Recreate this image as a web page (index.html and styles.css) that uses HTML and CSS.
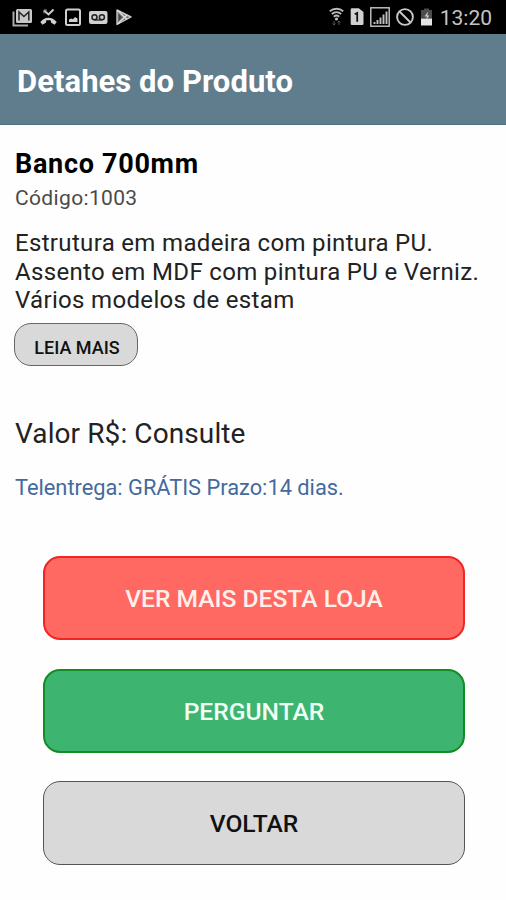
FILE: index.html
```html
<!DOCTYPE html>
<html lang="pt-BR">
<head>
    <meta charset="UTF-8">
    <meta name="viewport" content="width=device-width, initial-scale=1.0">
    <title>Detahes do Produto</title>
    <link rel="stylesheet" href="styles.css">
</head>
<body>
    <div class="status-bar">
        <div class="status-left">
            <!-- Gmail -->
            <svg width="21" height="20" viewBox="0 0 21 20">
                <path d="M1.500 4.500v14H16" fill="none" stroke="#aaa" stroke-width="2"/>
                <rect x="4" y="2" width="16" height="14" rx="1.500" fill="#c8c8c8"/>
                <path d="M7 13.500V5l4.900 4.500L16.800 5v8.500" fill="none" stroke="#222" stroke-width="1.500"/>
            </svg>
            <!-- missed call -->
            <svg width="18" height="20" viewBox="0 0 18 20">
                <path d="M4 3.500l4.500 4L13.500 2.500" fill="none" stroke="#d0d0d0" stroke-width="2"/>
                <path d="M4 6.500V3h3" fill="none" stroke="#999" stroke-width="1"/>
                <path d="M.3 15C5 9.300 12 9.300 16.800 15l-2.300 2.800-3.600-2.300v-2c-1.500-.4-3.300-.4-4.800 0v2l-3.600 2.300z" fill="#d0d0d0"/>
            </svg>
            <!-- image -->
            <svg width="17" height="20" viewBox="0 0 17 20">
                <rect x="1" y="2.500" width="14" height="15.500" rx="1.500" fill="none" stroke="#d0d0d0" stroke-width="2"/>
                <path d="M4 15v-2.500l2.500-1 1.500.8 2-2.300 2.500 1.500V15z" fill="#d0d0d0"/>
            </svg>
            <!-- voicemail -->
            <svg width="20" height="20" viewBox="0 0 20 20">
                <rect x="0" y="4" width="18.500" height="13" rx="2" fill="#d0d0d0"/>
                <circle cx="5.500" cy="10.300" r="2.500" fill="none" stroke="#222" stroke-width="1.500"/>
                <circle cx="12.900" cy="10.300" r="2.500" fill="none" stroke="#222" stroke-width="1.500"/>
                <path d="M5.200 13h8" stroke="#222" stroke-width="1.300"/>
            </svg>
            <!-- play store -->
            <svg width="17" height="20" viewBox="0 0 17 20">
                <path d="M1 3v14.500L15 10z" fill="#777" stroke="#c8c8c8" stroke-width="1.400" stroke-linejoin="round"/>
                <path d="M1.500 3.500l9.500 9M1.500 17L11 8" stroke="#ddd" stroke-width="1.500"/>
                <path d="M2.700 6.800v7l3.200-3.500z" fill="#444"/>
            </svg>
        </div>
        <div class="status-right">
            <!-- wifi -->
            <svg width="15" height="20" viewBox="0 0 15 20">
                <path d="M.8 4.200c3.800-3.200 9.600-3.200 13.400 0M2.800 7c2.700-2.300 6.700-2.300 9.400 0M4.800 9.700c1.600-1.400 3.800-1.400 5.400 0" fill="none" stroke="#bbb" stroke-width="1.900"/>
                <circle cx="7.500" cy="12" r="1.600" fill="#bbb"/>
                <path d="M5 14v4M3.500 16.500L5 18l1.500-1.500M10 18v-4M8.500 15.500L10 14l1.500 1.500" fill="none" stroke="#555" stroke-width="1"/>
            </svg>
            <!-- SIM 1 -->
            <svg width="14" height="20" viewBox="0 0 14 20">
                <path d="M2 1.300h6.800l4.700 3.800v11.700a1.300 1.300 0 0 1-1.300 1.300H2A1.300 1.300 0 0 1 .7 16.800V2.600A1.300 1.300 0 0 1 2 1.300z" fill="#d0d0d0"/>
                <path d="M4.700 7.200l2.500-1.300v8.900" fill="none" stroke="#111" stroke-width="1.800"/>
            </svg>
            <!-- signal -->
            <svg width="20" height="20" viewBox="0 0 20 20">
                <rect x=".8" y=".8" width="18.400" height="18.400" fill="none" stroke="#c8c8c8" stroke-width="1.400"/>
                <path d="M4.500 17v-2M7.500 17v-4M10.500 17v-6.500M13.500 17V7.500M16.500 17V4.500" stroke="#c0c0c0" stroke-width="1.900"/>
            </svg>
            <!-- blocked -->
            <svg width="18" height="20" viewBox="0 0 18 20">
                <circle cx="9" cy="10" r="7.900" fill="none" stroke="#c8c8c8" stroke-width="1.900"/>
                <path d="M3.500 4.500l11 11" stroke="#c8c8c8" stroke-width="1.900"/>
            </svg>
            <!-- battery -->
            <svg width="13" height="20" viewBox="0 0 13 20">
                <path d="M4 1.500h5V3h3v8.500H1V3h3z" fill="#4c4c4c"/>
                <path d="M1 11.500h11v7H1z" fill="#e4e4e4"/>
                <path d="M8 4.500l-3.500 5H7l-1 3.500 3.500-4.500H7.300z" fill="#ccc"/>
            </svg>
            <span class="clock">13:20</span>
        </div>
    </div>

    <header class="header">
        <h1>Detahes do Produto</h1>
    </header>

    <main class="product">
        <h2 class="product-name">Banco 700mm</h2>
        <p class="product-code">Código:1003</p>
        <p class="product-description">
            Estrutura em madeira com pintura PU.<br>
            Assento em MDF com pintura PU e Verniz.<br>
            Vários modelos de estam
        </p>
        <button class="read-more">LEIA MAIS</button>
        <p class="product-price">Valor R$: Consulte</p>
        <p class="product-delivery">Telentrega: GRÁTIS Prazo:14 dias.</p>

        <div class="actions">
            <button class="action store">VER MAIS DESTA LOJA</button>
            <button class="action ask">PERGUNTAR</button>
            <button class="action back">VOLTAR</button>
        </div>
    </main>
</body>
</html>
```
FILE: styles.css
```css
* {
    box-sizing: border-box;
}
body {
    margin: 0;
    font-family: Roboto, sans-serif;
    background-color: #fefefe;
    color: #222;
}
h1, h2, p {
    margin: 0;
    white-space: nowrap;
}
button {
    font-family: inherit;
    font-weight: 500;
    padding: 0;
}
.status-bar {
    height: 34px;
    padding: 0 14px 0 12px;
    background-color: #000;
    display: flex;
    justify-content: space-between;
    align-items: center;
}
.status-left {
    display: flex;
    gap: 7px;
}
.status-right {
    display: flex;
    align-items: center;
    gap: 6px;
}
.clock {
    padding: 2px 0 0 1px;
    font-size: 21px;
    line-height: 32px;
    color: #c4c4c4;
}
.header {
    height: 91px;
    padding: 5px 17px 0;
    background-color: #607d8d;
    border-bottom: 1px solid #53707f;
    display: flex;
    align-items: center;
}
.header h1 {
    font-size: 31px;
    line-height: 36px;
    font-weight: 700;
    letter-spacing: 0.050px;
    color: #fff;
}
.product {
    padding: 21px 14px 0;
}
.product-name {
    padding-left: 1px;
    font-size: 27px;
    line-height: 36px;
    font-weight: 700;
    letter-spacing: 0.700px;
    color: #000;
}
.product-code {
    padding-left: 1px;
    font-size: 21px;
    line-height: 32px;
    letter-spacing: 0.350px;
    color: #4a4a4a;
}
.product-description {
    margin-top: 15px;
    padding-left: 1px;
    font-size: 24px;
    line-height: 28.700px;
    letter-spacing: 0.330px;
}
.read-more {
    display: block;
    width: 124px;
    height: 43px;
    margin-top: 8px;
    padding: 6px 0 0 2px;
    border: 1px solid #666;
    border-radius: 17px;
    background-color: #d9d9d9;
    color: #111;
    font-size: 18px;
}
.product-price {
    margin-top: 50px;
    padding-left: 1px;
    font-size: 28px;
    line-height: 36px;
    letter-spacing: 0.100px;
}
.product-delivery {
    margin-top: 22px;
    padding-left: 1px;
    font-size: 21.800px;
    line-height: 28px;
    color: #446a9d;
}
.actions {
    margin: 54px 27.500px 0 28.500px;
    display: flex;
    flex-direction: column;
    gap: 28.500px;
}
.action {
    height: 84px;
    padding: 1px 0 0 1px;
    border: 2px solid;
    border-radius: 17px;
    font-size: 24.600px;
}
.store {
    background-color: #ff6961;
    border-color: #f02525;
    color: #fff0ed;
}
.ask {
    background-color: #3eb471;
    border-color: #148c25;
    color: #f0fff4;
}
.back {
    background-color: #d9d9d9;
    border-width: 1px;
    border-color: #555;
    color: #111;
}
```
